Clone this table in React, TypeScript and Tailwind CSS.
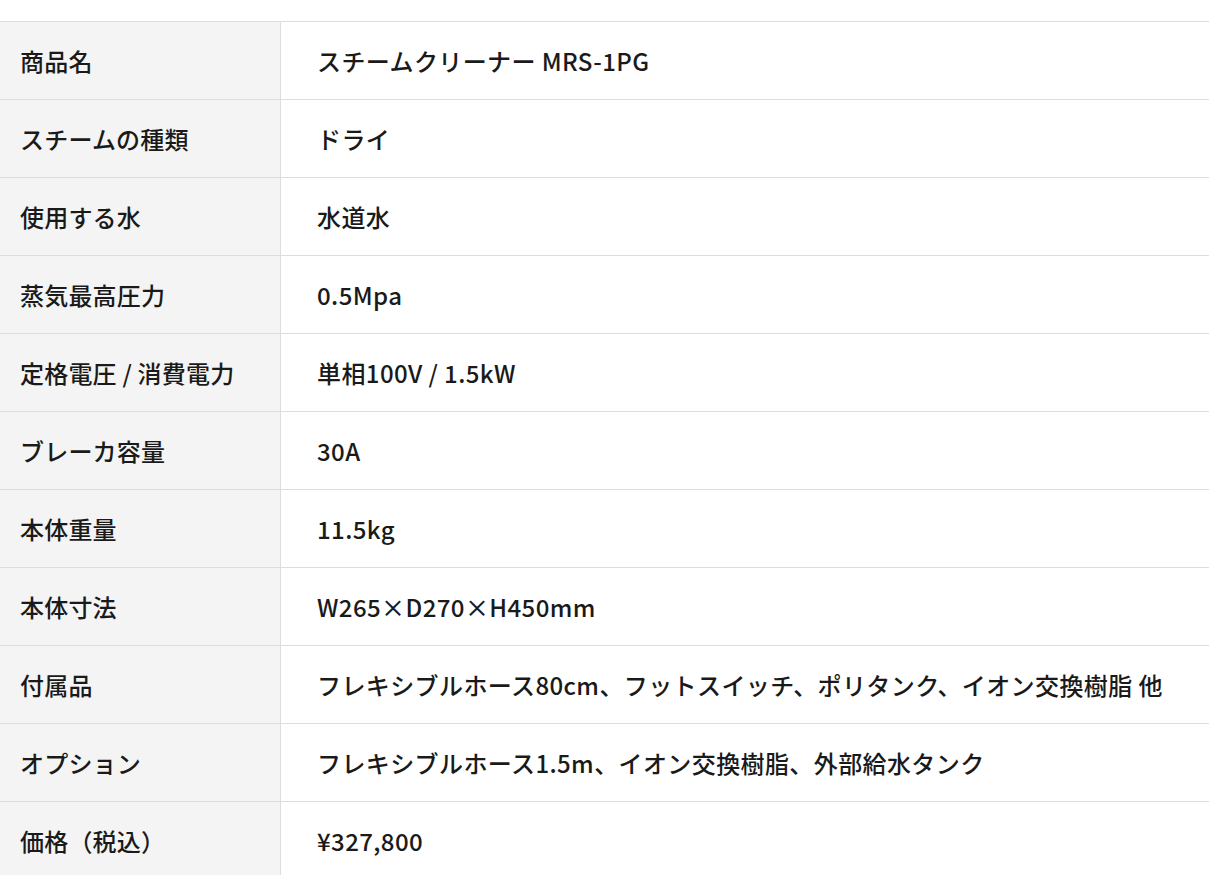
const rows: [string, string][] = [
  ["商品名", "スチームクリーナー MRS-1PG"],
  ["スチームの種類", "ドライ"],
  ["使用する水", "水道水"],
  ["蒸気最高圧力", "0.5Mpa"],
  ["定格電圧 / 消費電力", "単相100V / 1.5kW"],
  ["ブレーカ容量", "30A"],
  ["本体重量", "11.5kg"],
  ["本体寸法", "W265×D270×H450mm"],
  ["付属品", "フレキシブルホース80cm、フットスイッチ、ポリタンク、イオン交換樹脂 他"],
  ["オプション", "フレキシブルホース1.5m、イオン交換樹脂、外部給水タンク"],
  ["価格（税込）", "¥327,800"],
];

export default function App() {
  return (
    <div
      className="bg-white w-[1209px] h-[875px] overflow-hidden pt-[21px] text-[#1a1a1a]"
      style={{ fontFamily: '"Noto Sans CJK JP", "Noto Sans", sans-serif' }}
    >
      <div className="border-t border-[#dddddd]">
        {rows.map(([k, v]) => (
          <div key={k} className="flex h-[78px] border-b border-[#dddddd]">
            <div className="w-[281px] shrink-0 bg-[#f4f4f4] border-r border-[#dddddd] flex items-center pl-[20px] text-[24px] font-medium tracking-[0.2px] whitespace-nowrap">
              {k}
            </div>
            <div className="flex-1 flex items-center pl-[36px] text-[24px] font-medium tracking-[0.4px] whitespace-nowrap">
              {v}
            </div>
          </div>
        ))}
      </div>
    </div>
  );
}
